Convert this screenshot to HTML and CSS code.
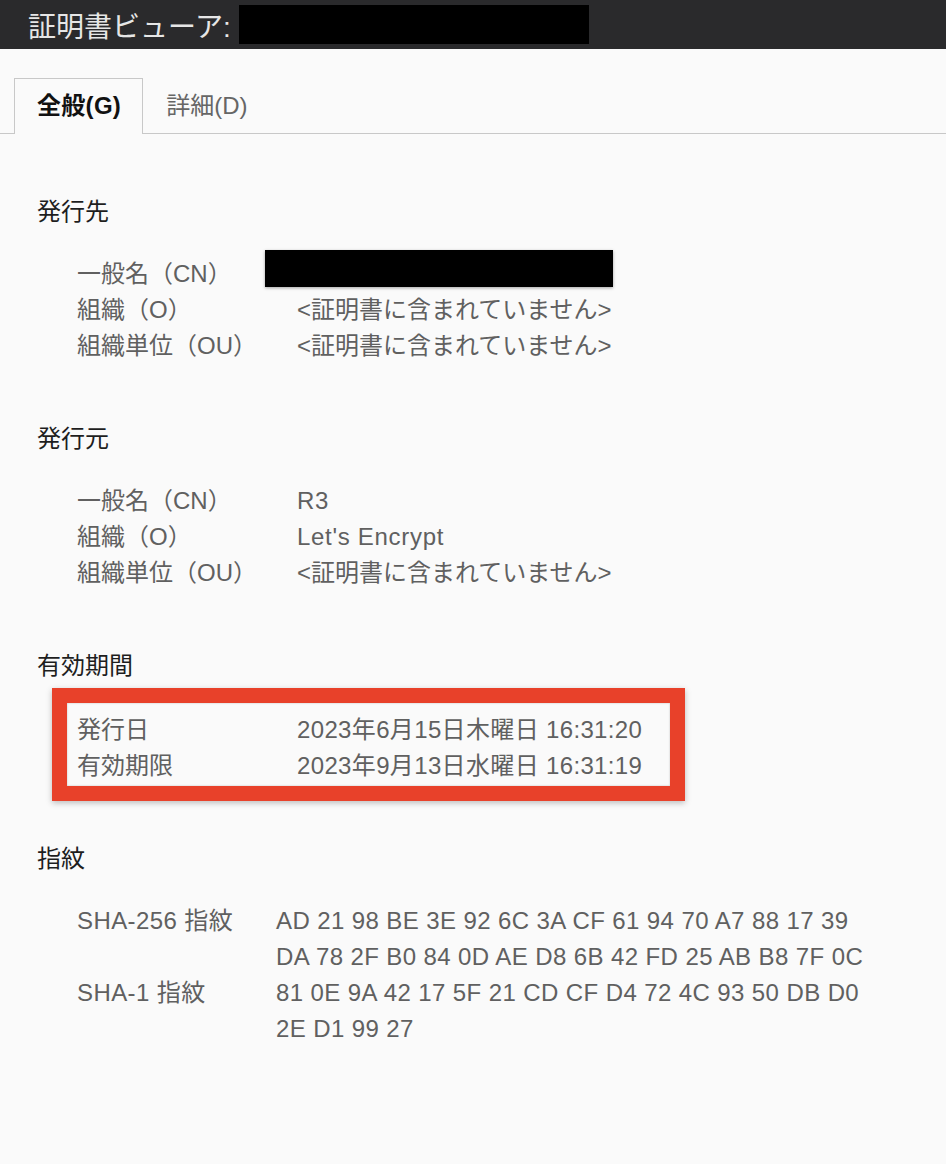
FILE: index.html
```html
<!DOCTYPE html>
<html lang="ja">
<head>
  <meta charset="UTF-8" />
  <title>証明書ビューア</title>
  <link rel="stylesheet" href="styles.css">
</head>
<body>

  <div class="titlebar">
    <span>証明書ビューア:</span>
    <span class="redact title-redact"></span>
  </div>

  <div class="tabs">
    <div class="tab active">全般(G)</div>
    <div class="tab">詳細(D)</div>
  </div>

  <div class="content">
    <div class="section">
      <h2>発行先</h2>
      <div class="rows">
        <div class="label">一般名（CN）</div>
        <div class="value"><span class="redact cn-redact"></span></div>
        <div class="label">組織（O）</div>
        <div class="value">&lt;証明書に含まれていません&gt;</div>
        <div class="label">組織単位（OU）</div>
        <div class="value">&lt;証明書に含まれていません&gt;</div>
      </div>
    </div>

    <div class="section">
      <h2>発行元</h2>
      <div class="rows">
        <div class="label">一般名（CN）</div>
        <div class="value latin">R3</div>
        <div class="label">組織（O）</div>
        <div class="value latin">Let's Encrypt</div>
        <div class="label">組織単位（OU）</div>
        <div class="value">&lt;証明書に含まれていません&gt;</div>
      </div>
    </div>

    <div class="section">
      <h2>有効期間</h2>
      <div class="rows validity">
        <div class="label">発行日</div>
        <div class="value">2023年6月15日木曜日 16:31:20</div>
        <div class="label">有効期限</div>
        <div class="value">2023年9月13日水曜日 16:31:19</div>
        <div class="highlight"></div>
      </div>
    </div>

    <div class="section">
      <h2>指紋</h2>
      <div class="rows fingerprints">
        <div class="label">SHA-256 指紋</div>
        <div class="value">AD 21 98 BE 3E 92 6C 3A CF 61 94 70 A7 88 17 39<br>DA 78 2F B0 84 0D AE D8 6B 42 FD 25 AB B8 7F 0C</div>
        <div class="label">SHA-1 指紋</div>
        <div class="value">81 0E 9A 42 17 5F 21 CD CF D4 72 4C 93 50 DB D0<br>2E D1 99 27</div>
      </div>
    </div>
  </div>

</body>
</html>
```

FILE: styles.css
```css
body {
  margin: 0;
  padding: 0;
  background-color: #fafafa;
  font-family: "Liberation Sans", "Noto Sans CJK JP", sans-serif;
  color: #222;
}

.titlebar {
  height: 49px;
  background-color: #2a2a2c;
  color: #e6e6e6;
  font-size: 28px;
  display: flex;
  align-items: center;
  padding-left: 28px;
}

.redact {
  display: inline-block;
  background-color: #000;
}

.title-redact {
  width: 350px;
  height: 39px;
  margin-left: 8px;
}

.tabs {
  display: flex;
  margin-top: 29px;
  padding-left: 14px;
  border-bottom: 1px solid #c8c8c8;
}

.tab {
  height: 54px;
  line-height: 54px;
  padding: 0 22px;
  font-size: 24px;
  color: #666;
  border: 1px solid transparent;
  border-bottom: none;
}

.tab.active {
  color: #111;
  font-weight: bold;
  padding: 0 21px 0 22px;
  letter-spacing: 0.3px;
  border-color: #c8c8c8;
  background-color: #fafafa;
  margin-bottom: -1px;
  height: 55px;
}

.content {
  padding: 60px 0 60px 37px;
}

.section {
  margin-bottom: 57px;
}

.section h2 {
  margin: 0 0 26px;
  font-size: 24px;
  font-weight: normal;
  line-height: 36px;
  color: #1e1e1e;
}

.rows {
  display: grid;
  grid-template-columns: 220px 1fr;
  margin-left: 40px;
  font-size: 24px;
  line-height: 36px;
  color: #606060;
  position: relative;
}

.rows .latin {
  letter-spacing: 0.7px;
}

.fingerprints {
  grid-template-columns: 199px 1fr;
  letter-spacing: 0.4px;
}

.value {
  position: relative;
}

.validity .value {
  letter-spacing: 0.35px;
}

.cn-redact {
  position: absolute;
  left: -32px;
  top: -6px;
  width: 348px;
  height: 37px;
  box-shadow: 0 1px 3px rgba(0, 0, 0, 0.35);
}

.validity {
  margin-top: 28px;
}

.highlight {
  position: absolute;
  left: -25px;
  top: -24px;
  width: 633px;
  height: 113px;
  box-sizing: border-box;
  border: 15px solid #e8412a;
  box-shadow: 0 2px 6px rgba(0, 0, 0, 0.25), inset 0 0 2px rgba(0, 0, 0, 0.25);
}
```
